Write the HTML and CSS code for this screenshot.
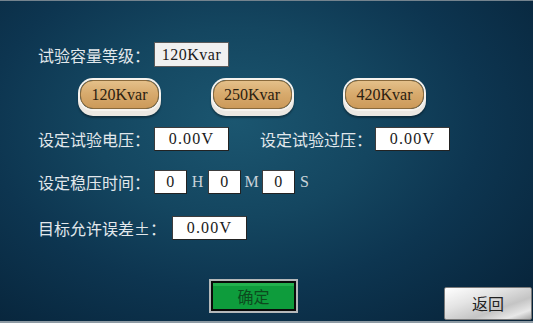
FILE: index.html
```html
<!DOCTYPE html>
<html lang="zh-CN">
<head>
<meta charset="utf-8">
<title>试验容量设置</title>
<link rel="stylesheet" href="styles.css">
</head>
<body>
<div class="screen">
  <div class="row r1">
    <span class="lbl w115">试验容量等级：</span>
    <span class="box grey">120Kvar</span>
  </div>
  <div class="btns">
    <button class="cap">120Kvar</button>
    <button class="cap">250Kvar</button>
    <button class="cap">420Kvar</button>
  </div>
  <div class="row r2">
    <span class="lbl w115">设定试验电压：</span>
    <span class="box num">0.00V</span>
    <span class="lbl w115 second">设定试验过压：</span>
    <span class="box num">0.00V</span>
  </div>
  <div class="row r3">
    <span class="lbl w115">设定稳压时间：</span>
    <span class="box small">0</span>
    <span class="unit">H</span>
    <span class="box small">0</span>
    <span class="unit">M</span>
    <span class="box small">0</span>
    <span class="unit last">S</span>
  </div>
  <div class="row r4">
    <span class="lbl w134">目标允许误差±：</span>
    <span class="box num">0.00V</span>
  </div>
  <div class="footer">
    <button class="ok">确定</button>
    <button class="back">返回</button>
  </div>
</div>
</body>
</html>
```
FILE: styles.css
```css
html, body {
  margin: 0;
  padding: 0;
  background: #0b2a40;
}

.screen {
  box-sizing: border-box;
  width: 533px;
  height: 323px;
  overflow: hidden;
  border-top: 1px solid #74838e;
  border-bottom: 2px solid #8d9aa3;
  padding: 41px 0 0 38px;
  display: flex;
  flex-direction: column;
  background:
    radial-gradient(ellipse 75% 85% at 44% 38%, #1b5670 0%, #144660 35%, #0d3550 62%, #072339 100%);
  font-family: "Noto Sans CJK SC", "Noto Sans", sans-serif;
}

.row {
  display: flex;
  align-items: center;
  height: 24px;
}

.lbl {
  color: #e2e8ec;
  font-size: 16px;
  line-height: 24px;
  white-space: nowrap;
  font-family: "Noto Sans CJK SC", sans-serif;
}

.w115 { width: 116px; }
.w134 { width: 134px; }
.second { margin-left: 31px; width: 115px; }

.box {
  box-sizing: border-box;
  width: 75px;
  height: 24px;
  background: #ffffff;
  border: 1px solid #3c3c3c;
  border-right-color: #222;
  border-bottom-color: #222;
  color: #1a1a1a;
  font-family: "Liberation Serif", "Times New Roman", serif;
  font-size: 16px;
  line-height: 22px;
  text-align: center;
  letter-spacing: 0.5px;
}

.box.num { letter-spacing: 1.2px; }

.box.grey {
  background: #f0f0f0;
  border-color: #5a5a5a;
  height: 25px;
  line-height: 23px;
}

.box.small { width: 33px; }

.unit {
  width: 21px;
  text-align: center;
  color: #c9d2d9;
  font-family: "Liberation Serif", serif;
  font-size: 16px;
}
.unit.last { width: auto; margin-left: 5px; }

.r1 { height: 25px; }
.r2 { margin-top: 18px; }
.r3 { margin-top: 19px; }
.r4 { margin-top: 22px; }

.btns {
  display: flex;
  gap: 53.5px;
  margin-top: 13px;
  padding-left: 42px;
}

.cap {
  box-sizing: border-box;
  width: 79px;
  height: 29px;
  padding: 0;
  border: 1px solid #8a6a3c;
  border-radius: 13px;
  background: linear-gradient(#e4c08a 0%, #d8ab6e 45%, #cc9a5a 100%);
  box-shadow:
    0 0 0 2px #f6f3ee,
    0 5px 0 2px #ece8e2,
    0 7px 2px 2px rgba(0, 0, 0, 0.35);
  color: #2a2010;
  font-family: "Liberation Serif", serif;
  font-size: 16px;
  line-height: 27px;
}

.footer {
  display: flex;
  align-items: flex-start;
  margin-top: 39px;
  padding-left: 171px;
}

.ok {
  box-sizing: border-box;
  width: 89px;
  height: 34px;
  padding: 0;
  border: 2px solid #b4b8ba;
  outline: none;
  background: #0e9c3c;
  box-shadow: inset 0 0 0 2px #0a0a0a, inset 0 3px 0 2px #23b04e;
  color: #0c4a1e;
  font-family: "Noto Sans CJK SC", sans-serif;
  font-size: 16px;
  line-height: 28px;
}

.back {
  box-sizing: border-box;
  width: 88px;
  height: 33px;
  margin-top: 8px;
  margin-left: 146px;
  padding: 0;
  border: 1px solid #7a7a7a;
  border-radius: 2px;
  background: linear-gradient(160deg, #ffffff 0%, #e4e4e4 35%, #c4c4c4 65%, #e8e8e8 85%, #a8a8a8 100%);
  color: #222;
  font-family: "Noto Sans CJK SC", sans-serif;
  font-size: 16px;
  line-height: 31px;
}
```
